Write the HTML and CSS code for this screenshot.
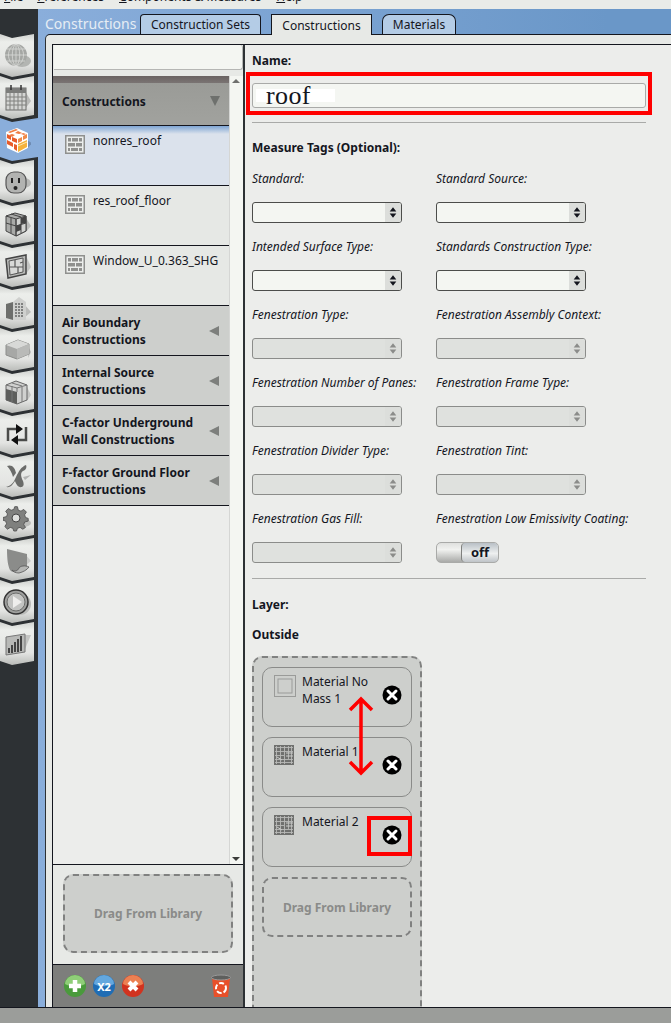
FILE: index.html
```html
<!DOCTYPE html>
<html lang="en">
<head>
<meta charset="utf-8">
<title>Constructions</title>
<link rel="stylesheet" href="styles.css">
</head>
<body>
<svg class="defs" width="0" height="0">
  <defs>
    <symbol id="brick" viewBox="0 0 20 19">
      <rect x=".75" y=".75" width="18.500" height="17.500" fill="#eceeec" stroke="#8f908e" stroke-width="1.500"/>
      <path d="M3 3h3v3.500H3zM7 3h6v3.500H7zM14 3h3v3.500h-3zM3 8h7v3.500H3zM11 8h6v3.500h-6zM3 13h2v3H3zM6 13h7v3H6zM14 13h3v3h-3z" fill="#8f908e"/>
    </symbol>
    <symbol id="hatch" viewBox="0 0 20 20">
      <rect width="20" height="20" fill="#6f706e"/>
      <path d="M1 2.500h18M1 6.500h18M1 10.500h9M1 14.500h18M1 17.500h18M2.500 1v18M6.500 1v18M10.500 1v18M14.500 1v13M17.500 1v18" stroke="#b9bab8" stroke-width=".9"/>
      <path d="M12 8h7M12 11h7M3 12l5 3" stroke="#c9cac8" stroke-width="1"/>
    </symbol>
    <symbol id="xbtn" viewBox="0 0 20 20">
      <circle cx="10" cy="10" r="9.500" fill="#000"/>
      <path d="M6 6l8 8M14 6l-8 8" stroke="#fff" stroke-width="3" stroke-linecap="round"/>
    </symbol>
    <symbol id="updown" viewBox="0 0 16 20">
      <path d="M8 4.500l3.500 4.500h-7zM8 15.500l-3.500-4.500h7z" fill="currentColor"/>
    </symbol>
  </defs>
</svg>

<div class="menu">
  <span class="m-file"><u>F</u>ile</span>
  <span class="m-pref"><u>P</u>references</span>
  <span class="m-comp"><u>C</u>omponents &amp; Measures</span>
  <span class="m-help"><u>H</u>elp</span>
</div>

<div class="app">
  <nav class="rail">
    <div class="rb"><svg class="ri" viewBox="0 0 28 28"><ellipse cx="19" cy="19" rx="9" ry="6" fill="#b3b5b2"/><circle cx="13" cy="13" r="11" fill="#a5a7a4"/><path d="M2 13h22M4 7h18M4 19h18M13 2v22M13 2c-5 3-5 19 0 22M13 2c5 3 5 19 0 22M13 2c-10 3-10 19 0 22M13 2c10 3 10 19 0 22" stroke="#d9dad8" stroke-width=".8" fill="none"/></svg></div>
    <div class="rb"><svg class="ri" viewBox="0 0 28 28"><path d="M22 7l6 10-6 8z" fill="#b9bab8"/><rect x="3" y="4" width="20" height="22" fill="#d4d5d3" stroke="#6a6b69"/><rect x="3" y="4" width="20" height="5" fill="#7c7d7b"/><path d="M3 13h20M3 17h20M3 21h20M7 9v17M11 9v17M15 9v17M19 9v17" stroke="#80817f" stroke-width="1"/><path d="M8 1v5M18 1v5" stroke="#333" stroke-width="1.500"/></svg></div>
    <div class="rb sel"><svg class="ri" viewBox="0 0 28 28"><path d="M24 14l5 3-5 6z" fill="#6f8cb3"/><path d="M3 6l11-4 11 5v15l-10 5-11-5z" fill="#fff"/><path d="M5 6l8-3 2 1-8 3zM15 5l4 2-3 1-4-1zM20 7l3 1-2 1-3-1zM9 8l3 1-3 2-3-2z" fill="#ef7b42"/><path d="M4 8l4 2v4L4 12zM9 11l5 2v4l-5-2zM4 14l6 3v4l-6-3zM11 18l3 1v6l-3-2z" fill="#e85c2a"/><path d="M15 13l4-2v4l-4 2zM20 10l4-2v4l-4 2z" fill="#ef8a4a"/><path d="M15 18l9-4v7l-9 5z" fill="#f4b23c"/><path d="M15 20l9-4" stroke="#fbe6b0"/></svg></div>
    <div class="rb"><svg class="ri" viewBox="0 0 28 28"><ellipse cx="21" cy="15" rx="7" ry="5" fill="#b8b9b7"/><rect x="3" y="4" width="20" height="21" rx="8" fill="#b2b3b1" stroke="#555" stroke-width="1.200"/><path d="M9 10v5M16 10v5" stroke="#222" stroke-width="2"/><circle cx="12.500" cy="20" r="2" fill="#222"/></svg></div>
    <div class="rb"><svg class="ri" viewBox="0 0 28 28"><path d="M23 8l5 8-5 6z" fill="#bbbcba"/><path d="M3 6l9-3 11 3v15l-10 5-10-5z" fill="#a9aaa8" stroke="#444"/><path d="M13 9l10-3v15l-10 5z" fill="#d2d3d1" stroke="#444"/><path d="M3 6l10 3v17M3 13l10 3 10-3M8 4l10 3M8 8v15M18 8v15" stroke="#444" fill="none"/><path d="M13 16l5-2v6l-5 2zM18 8l5-2v7l-5 1z" fill="#444"/></svg></div>
    <div class="rb"><svg class="ri" viewBox="0 0 28 28"><path d="M24 6l4 9-5 7z" fill="#c4c5c3"/><path d="M3 7l20-4v19L5 26z" fill="#b9bab8" stroke="#444" stroke-width="1.500"/><path d="M6 9l14-3v14L7 23z" fill="#d8d9d7" stroke="#555"/><path d="M12 8v7h8M7 15h5M15 15v6M17 11l3-1" stroke="#555" stroke-width="1.200" fill="none"/></svg></div>
    <div class="rb"><svg class="ri" viewBox="0 0 28 28"><path d="M21 10l7 8-7 6z" fill="#bbbcba"/><path d="M3 10l7-2v18l-7-2z" fill="#6d6e6c"/><path d="M10 8l6-5 7 5v18H10z" fill="#cfd0ce"/><path d="M12 10h9M12 13h9M12 16h9M12 19h9M12 22h9" stroke="#666" stroke-width="1.500" stroke-dasharray="2 1"/></svg></div>
    <div class="rb"><svg class="ri" viewBox="0 0 28 28"><path d="M26 12l2 4-3 6z" fill="#bbbcba"/><path d="M3 9l12-5 11 4v10l-12 5-11-4z" fill="#a7a8a6" stroke="#8d8e8c"/><path d="M3 9l11 4 12-5-11-4z" fill="#d8d9d7"/><path d="M14 13v10l12-5V8z" fill="#b9bab8"/></svg></div>
    <div class="rb"><svg class="ri" viewBox="0 0 28 28"><path d="M24 9l4 8-4 6z" fill="#c4c5c3"/><path d="M3 7l10-4 11 4v15l-10 4-11-4z" fill="#d0d1cf" stroke="#666"/><path d="M14 14l-11-3v11l11 4z" fill="#5d5e5c"/><path d="M3 7l11 3 10-3M14 10v4M9 5l10 3M9 8v16M19 9v15" stroke="#777" fill="none"/></svg></div>
    <div class="rb"><svg class="ri" viewBox="0 0 28 28"><path d="M5 21V9h10M23 7v13H12" fill="none" stroke="#4a4b49" stroke-width="2.500"/><path d="M13 4l7 5-7 5zM15 15l-7 5 7 5z" fill="#111"/></svg></div>
    <div class="rb"><svg class="ri" viewBox="0 0 28 28"><path d="M20 15l8-2-6 5z" fill="#b4b5b3"/><path d="M3 25c7-2 8-6 10-10 3-6 5-10 10-12 1 2 0 5-3 6-3 2-2 6 0 10 1 3 1 5-1 6-4 1-6-3-7-6-2 3-4 7-9 6z" fill="#6b6c6a"/><path d="M4 4c5-2 8 2 9 7l-3 4c-1-4-3-8-6-11z" fill="#6b6c6a"/></svg></div>
    <div class="rb"><svg class="ri" viewBox="0 0 28 28"><ellipse cx="20" cy="19" rx="8" ry="4" fill="#bcbdbb"/><path d="M12 2l3 0 1 4 3 1 3-2 3 3-2 3 1 3 3 1v3l-4 1-1 3 2 3-3 2-3-2-3 1-1 3h-3l-1-3-3-1-3 2-3-3 2-3-1-3-3-1v-3l4-1 1-3-2-3 3-3 3 2 3-1z" transform="scale(.9) translate(1 1)" fill="#7f807e" stroke="#555"/><circle cx="13" cy="14" r="4" fill="#dfe0de" stroke="#444"/></svg></div>
    <div class="rb"><svg class="ri" viewBox="0 0 28 28"><path d="M22 8l6 7-6 5z" fill="#c9cac8"/><path d="M4 3l20 5v13c-4-1-8 0-9 3-1 2-6 3-8 0C5 20 4 14 4 3z" fill="#8b8c8a"/><path d="M9 24c2 2 6 1 7-2 1-2 6-3 10-1-2 3-6 5-10 6-3 0-6-1-7-3z" fill="#b5b6b4" stroke="#555" stroke-width=".8"/></svg></div>
    <div class="rb"><svg class="ri" viewBox="0 0 28 28"><circle cx="17" cy="16" r="11" fill="#bbbcba"/><circle cx="13" cy="14" r="12" fill="#9fa09e" stroke="#333" stroke-width="1.500"/><circle cx="13" cy="14" r="9" fill="#c3c4c2" stroke="#6b6c6a"/><path d="M10 8l9 6-9 6z" fill="#eeeeec"/></svg></div>
    <div class="rb"><svg class="ri" viewBox="0 0 28 28"><path d="M22 5l6 0-6 14z" fill="#c4c5c3"/><path d="M3 7l19-3v18L3 25z" fill="#b8b9b7" stroke="#777"/><path d="M6 23v-5M9 23v-8M12 22v-10M15 22v-13M18 21v-15" stroke="#444" stroke-width="2"/></svg></div>
  </nav>

  <div class="main">
    <header class="top">
      <h1 class="title">Constructions</h1>
      <div class="tabs">
        <div class="tab tab-sets">Construction Sets</div>
        <div class="tab tab-on">Constructions</div>
        <div class="tab tab-mat">Materials</div>
      </div>
    </header>

    <div class="panel">
      <div class="gutter"></div>
      <div class="split">
        <aside class="lib">
          <div class="search"></div>
          <div class="lib-gap"></div>
          <div class="tree">
            <div class="tree-list">
              <div class="cap"></div>
              <div class="head head-open"><span>Constructions</span><i class="tri tri-down"></i></div>
              <div class="row row-sel"><svg class="brick"><use href="#brick"/></svg><span class="row-t">nonres_roof</span></div>
              <div class="row"><svg class="brick"><use href="#brick"/></svg><span class="row-t">res_roof_floor</span></div>
              <div class="row"><svg class="brick"><use href="#brick"/></svg><span class="row-t">Window_U_0.363_SHGC</span></div>
              <div class="head"><span>Air Boundary<br>Constructions</span><i class="tri"></i></div>
              <div class="head"><span>Internal Source<br>Constructions</span><i class="tri"></i></div>
              <div class="head"><span>C-factor Underground<br>Wall Constructions</span><i class="tri"></i></div>
              <div class="head"><span>F-factor Ground Floor<br>Constructions</span><i class="tri"></i></div>
            </div>
            <div class="sbar"><i class="sb-up"></i><i class="sb-dn"></i></div>
          </div>
          <div class="drop-wrap"><div class="drag drag-lib">Drag From Library</div></div>
          <div class="actions">
            <svg class="act" viewBox="0 0 22 22"><circle cx="11" cy="11" r="11" fill="#4a9a3c"/><path d="M1 9a10 9 0 0 1 20 0c-5 3-15 3-20 0z" fill="#8fce78"/><path d="M11 5v12M5 11h12" stroke="#fff" stroke-width="4.500"/></svg>
            <svg class="act" viewBox="0 0 22 22"><circle cx="11" cy="11" r="11" fill="#1f6db5"/><path d="M1 9a10 9 0 0 1 20 0c-5 3-15 3-20 0z" fill="#63a7de"/><text x="11" y="15.500" class="act-t">X2</text></svg>
            <svg class="act" viewBox="0 0 22 22"><circle cx="11" cy="11" r="11" fill="#d1331f"/><path d="M1 9a10 9 0 0 1 20 0c-5 3-15 3-20 0z" fill="#ec8052"/><path d="M7 7l8 8M15 7l-8 8" stroke="#fff" stroke-width="4"/></svg>
            <svg class="trash" viewBox="0 0 20 24"><path d="M1 4h18l-2 19H3z" fill="#e8502a"/><ellipse cx="10" cy="3.500" rx="9.500" ry="2.500" fill="#5e5f5d" stroke="#999"/><circle cx="10" cy="14" r="5" fill="none" stroke="#fff" stroke-width="2" stroke-dasharray="5 2"/></svg>
          </div>
        </aside>

        <section class="detail">
          <div class="lbl-b name-l">Name:</div>
          <div class="name-in"><div class="name-patch">roof</div></div>
          <hr class="sep sep-1">
          <div class="lbl-b tags-l">Measure Tags (Optional):</div>
          <div class="fields">
            <div class="f"><div class="lbl-i">Standard:</div><div class="sel-box"><b><svg><use href="#updown"/></svg></b></div></div>
            <div class="f"><div class="lbl-i">Standard Source:</div><div class="sel-box"><b><svg><use href="#updown"/></svg></b></div></div>
            <div class="f"><div class="lbl-i">Intended Surface Type:</div><div class="sel-box"><b><svg><use href="#updown"/></svg></b></div></div>
            <div class="f"><div class="lbl-i">Standards Construction Type:</div><div class="sel-box"><b><svg><use href="#updown"/></svg></b></div></div>
            <div class="f"><div class="lbl-i">Fenestration Type:</div><div class="sel-box off"><b><svg><use href="#updown"/></svg></b></div></div>
            <div class="f"><div class="lbl-i">Fenestration Assembly Context:</div><div class="sel-box off"><b><svg><use href="#updown"/></svg></b></div></div>
            <div class="f"><div class="lbl-i">Fenestration Number of Panes:</div><div class="sel-box off"><b><svg><use href="#updown"/></svg></b></div></div>
            <div class="f"><div class="lbl-i">Fenestration Frame Type:</div><div class="sel-box off"><b><svg><use href="#updown"/></svg></b></div></div>
            <div class="f"><div class="lbl-i">Fenestration Divider Type:</div><div class="sel-box off"><b><svg><use href="#updown"/></svg></b></div></div>
            <div class="f"><div class="lbl-i">Fenestration Tint:</div><div class="sel-box off"><b><svg><use href="#updown"/></svg></b></div></div>
            <div class="f"><div class="lbl-i">Fenestration Gas Fill:</div><div class="sel-box off"><b><svg><use href="#updown"/></svg></b></div></div>
            <div class="f"><div class="lbl-i">Fenestration Low Emissivity Coating:</div><div class="toggle"><span class="knob">off</span></div></div>
          </div>
          <hr class="sep sep-2">
          <div class="lbl-b layer-l">Layer:</div>
          <div class="lbl-b out-l">Outside</div>
          <div class="stack">
            <div class="mat">
              <svg class="mat-i" viewBox="0 0 20 20"><rect x=".5" y=".5" width="21" height="21" fill="none" stroke="#9a9b99"/><rect x="4" y="4" width="14" height="14" fill="none" stroke="#9a9b99"/></svg>
              <span class="mat-t">Material No<br>Mass 1</span>
              <svg class="x"><use href="#xbtn"/></svg>
            </div>
            <div class="mat">
              <svg class="mat-i"><use href="#hatch"/></svg>
              <span class="mat-t">Material 1</span>
              <svg class="x"><use href="#xbtn"/></svg>
            </div>
            <div class="mat">
              <svg class="mat-i"><use href="#hatch"/></svg>
              <span class="mat-t">Material 2</span>
              <svg class="x"><use href="#xbtn"/></svg>
            </div>
            <div class="drag drag-layer">Drag From Library</div>
          </div>
          <div class="mark mark-name"></div>
          <div class="mark mark-x"></div>
          <svg class="mark-arrow" viewBox="0 0 28 80"><path d="M14 3v74M3 14L14 3l11 11M3 66l11 11 11-11" fill="none" stroke="#f00" stroke-width="3.500"/></svg>
        </section>
      </div>
    </div>
  </div>
</div>
<div class="status"></div>
</body>
</html>
```

FILE: styles.css
```css
* { box-sizing: border-box; }
html, body { margin: 0; padding: 0; }
body {
  width: 671px;
  height: 1023px;
  overflow: hidden;
  display: flex;
  flex-direction: column;
  font-family: "Noto Sans", sans-serif;
  font-size: 12px;
  color: #14161e;
  background: #e7e9e6;
}
.defs { position: absolute; }

.menu {
  height: 9px;
  flex: none;
  overflow: hidden;
  display: flex;
  background: #e9ebe8;
  line-height: 16px;
}
.menu span { margin-top: -11px; height: 16px; white-space: nowrap; }
.m-file { margin-left: 4px; }
.m-pref { margin-left: 14px; }
.m-comp { margin-left: 15px; }
.m-help { margin-left: 15px; }

.app { flex: none; height: 998px; display: flex; }

.rail {
  width: 38px;
  flex: none;
  background: #2d3134;
  padding-top: 25px;
  display: flex;
  flex-direction: column;
}
.rb {
  width: 34px;
  height: 44px;
  margin-bottom: -2px;
  flex: none;
  display: flex;
  align-items: center;
  justify-content: center;
  background: linear-gradient(#cfd1ce, #eceeeb 18%, #e3e4e2 70%, #b6b8b5);
  clip-path: polygon(0 0, 12px 4px, 34px 0, 34px 39px, 12px 43px, 0 39px);
}
.rb.sel {
  width: 38px;
  background: #8aaedb;
  clip-path: polygon(0 0, 12px 4px, 38px 0, 38px 39px, 12px 43px, 0 39px);
  padding-right: 4px;
}
.ri { width: 28px; height: 28px; display: block; }

.main {
  flex: 1;
  min-width: 0;
  display: flex;
  flex-direction: column;
  background: linear-gradient(90deg, #8aaedb, #6a97c8 90%);
}
.top {
  height: 25px;
  flex: none;
  display: flex;
  padding-left: 7px;
  align-items: flex-end;
}
.title {
  margin: 0;
  width: 95px;
  flex: none;
  align-self: flex-start;
  padding-top: 5px;
  font-size: 14px;
  line-height: 19px;
  font-weight: 400;
  color: #e6edf4;
  white-space: nowrap;
}
.tabs { display: flex; align-items: flex-end; height: 21px; }
.tab {
  height: 20px;
  border: 1px solid #14161e;
  border-bottom: 0;
  border-radius: 4px 4px 0 0;
  background: #b4cce6;
  padding-top: 1px;
  line-height: 17px;
  text-align: center;
  white-space: nowrap;
}
.tab-sets { width: 121px; margin-right: 10px; }
.tab-on {
  width: 101px;
  height: 21px;
  margin-right: 10px;
  margin-bottom: -1px;
  background: #e7e9e6;
  border-radius: 0;
  padding-top: 2px;
  position: relative;
}
.tab-mat { width: 74px; border-radius: 7px 7px 0 0; }

.panel {
  flex: 1;
  min-height: 0;
  margin-left: 7px;
  display: flex;
  flex-direction: column;
  background: #e7e9e6;
  border-top: 1px solid #14161e;
  border-left: 1px solid #2d3134;
  border-top-left-radius: 5px;
}
.gutter { height: 10px; flex: none; margin-left: 6px; border-bottom: 1px solid #14161e; }
.split { flex: 1; min-height: 0; display: flex; margin-left: 6px; }

.lib {
  width: 193px;
  flex: none;
  display: flex;
  flex-direction: column;
  border-left: 1px solid #14161e;
  border-right: 2px solid #2d3134;
}
.search {
  height: 25px;
  flex: none;
  background: #f4f6f2;
  border: 1px solid #b5b6b4;
  border-width: 0 1px 1px 0;
  border-radius: 0 3px 3px 0;
  margin-left: 1px;
}
.lib-gap { height: 6px; flex: none; }
.tree { flex: 1; min-height: 0; display: flex; background: #ecedeb; border-bottom: 1px solid #14161e; }
.tree-list { flex: 1; min-width: 0; }
.cap { height: 7px; background: linear-gradient(#6a6362, #7a7473); }
.head {
  height: 50px;
  padding-left: 9px;
  padding-right: 10px;
  display: flex;
  align-items: center;
  justify-content: space-between;
  background: #cdcfcc;
  border-bottom: 1px solid #14161e;
  font-weight: 700;
  line-height: 17px;
}
.head-open { height: 43px; padding-bottom: 6px; background: linear-gradient(#9a9b97, #a1a29e); }
.tri {
  width: 0;
  height: 0;
  border-style: solid;
  border-width: 5.500px 10px 5.500px 0;
  border-color: transparent #7d7f7c transparent transparent;
}
.tri-down { border-width: 10px 5.500px 0; border-color: #6e706d transparent transparent; margin-right: -1px; }
.row {
  height: 60px;
  display: flex;
  align-items: flex-start;
  padding: 9px 0 0 12px;
  background: #e6e8e5;
  border-bottom: 1px solid #14161e;
  overflow: hidden;
}
.row-sel { background: linear-gradient(#7fa5d3, #dbe2ec 8px); }
.brick { width: 20px; height: 19px; flex: none; margin-right: 8px; }
.row-t { width: 125px; line-height: 17px; margin-top: -3px; white-space: nowrap; overflow: hidden; }
.sbar {
  width: 14px;
  flex: none;
  display: flex;
  flex-direction: column;
  justify-content: space-between;
  background: #f4f6f2;
  border-left: 1px solid #d5d6d4;
}
.sb-up, .sb-dn { display: block; height: 10px; position: relative; }
.sb-up::after, .sb-dn::after {
  content: "";
  position: absolute;
  left: 2px;
  top: 3px;
  border-style: solid;
  border-width: 0 4px 4px;
  border-color: transparent transparent #6f706e;
}
.sb-dn::after { border-width: 4px 4px 0; border-color: #3c3d3b transparent transparent; }

.drop-wrap { height: 99px; flex: none; padding: 9px 9px 0 10px; }
.drag {
  border: 2px dashed #808180;
  border-radius: 10px;
  background: #cdcfcc;
  color: #8a8b89;
  font-weight: 700;
  display: flex;
  align-items: center;
  justify-content: center;
}
.drag-lib { width: 170px; height: 79px; }
.actions {
  height: 43px;
  flex: none;
  display: flex;
  align-items: flex-start;
  padding: 10px 0 0 11px;
  background: #7d7e7c;
  border-top: 1px solid #14161e;
}
.act { width: 22px; height: 22px; margin-right: 7px; flex: none; }
.act-t { font-family: "Noto Sans", sans-serif; font-size: 11px; font-weight: 700; fill: #fff; text-anchor: middle; }
.trash { width: 20px; height: 24px; margin-left: 60px; margin-top: -1px; flex: none; }

.detail {
  flex: 1;
  min-width: 0;
  position: relative;
  overflow: hidden;
  background: #ecedeb;
  padding: 0 25px 0 7px;
}
.lbl-b { font-weight: 700; line-height: 17px; }
.lbl-i { font-style: italic; line-height: 17px; white-space: nowrap; }
.name-l { margin-top: 7px; }
.name-in {
  height: 25px;
  margin-top: 14px;
  padding: 5px 0 0 3px;
  background: #f4f6f2;
  border: 1px solid #a9aaa8;
  border-radius: 3px;
}
.name-patch {
  width: 79px;
  height: 13px;
  padding-left: 10px;
  background: #fff;
  font-family: "Liberation Serif", serif;
  font-size: 26px;
  line-height: 13px;
  letter-spacing: .4px;
}
.sep { margin: 0; border: 0; height: 1px; background: #a9aaa8; }
.sep-1 { margin-top: 14px; }
.tags-l { margin-top: 16px; }
.fields {
  margin-top: 14px;
  display: grid;
  grid-template-columns: 184px 150px;
  grid-auto-rows: 68px;
}
.f .lbl-i { height: 32px; }
.sel-box {
  width: 150px;
  height: 21px;
  position: relative;
  background: #f4f6f2;
  border: 1px solid #4c4d4b;
  border-radius: 3px;
  color: #14161e;
}
.sel-box b {
  position: absolute;
  right: 0;
  top: 0;
  bottom: 0;
  width: 16px;
  background: #dcdedb;
  border-radius: 0 2px 2px 0;
}
.sel-box svg { width: 16px; height: 19px; display: block; }
.sel-box.off { background: #dfe1de; border-color: #8b8c8a; color: #8b8c8a; }
.toggle {
  width: 63px;
  height: 21px;
  border: 1px solid #a9aaa8;
  border-radius: 5px;
  background: linear-gradient(#dfe0de, #f1f2f0 35%, #a9aaa8);
  display: flex;
  justify-content: flex-end;
  overflow: hidden;
}
.knob {
  width: 37px;
  border-left: 1px solid #7f807e;
  border-radius: 4px;
  background: linear-gradient(#b9c0c6, #eef0f0 55%, #bfc4c8);
  text-align: center;
  font-weight: 700;
  font-size: 13px;
  line-height: 18px;
}
.sep-2 { margin-top: 0; }
.layer-l { margin-top: 17px; }
.out-l { margin-top: 13px; }
.stack {
  width: 170px;
  height: 400px;
  margin-top: 13px;
  padding: 9px 8px;
  background: #cdcfcc;
  border: 2px dashed #808180;
  border-radius: 10px;
  display: flex;
  flex-direction: column;
  gap: 10px;
}
.mat {
  height: 60px;
  flex: none;
  position: relative;
  display: flex;
  padding: 5px 0 0 11px;
  border: 1px solid #8a8b89;
  border-radius: 10px;
}
.mat-i { width: 20px; height: 20px; margin-top: 2px; margin-right: 8px; flex: none; overflow: visible; }
.mat-t { line-height: 17px; white-space: nowrap; }
.x { position: absolute; left: 119px; top: 17px; width: 20px; height: 20px; }
.drag-layer { height: 60px; flex: none; background: transparent; }
.mark { position: absolute; border: 4px solid #f00; }
.mark-name { left: 1px; top: 27px; width: 406px; height: 43px; }
.mark-x { left: 122px; top: 771px; width: 45px; height: 40px; }
.mark-arrow { position: absolute; left: 102px; top: 651px; width: 28px; height: 80px; }

.status { flex: 1; background: #9b9d9a; border-top: 1px solid #14161e; }
```
